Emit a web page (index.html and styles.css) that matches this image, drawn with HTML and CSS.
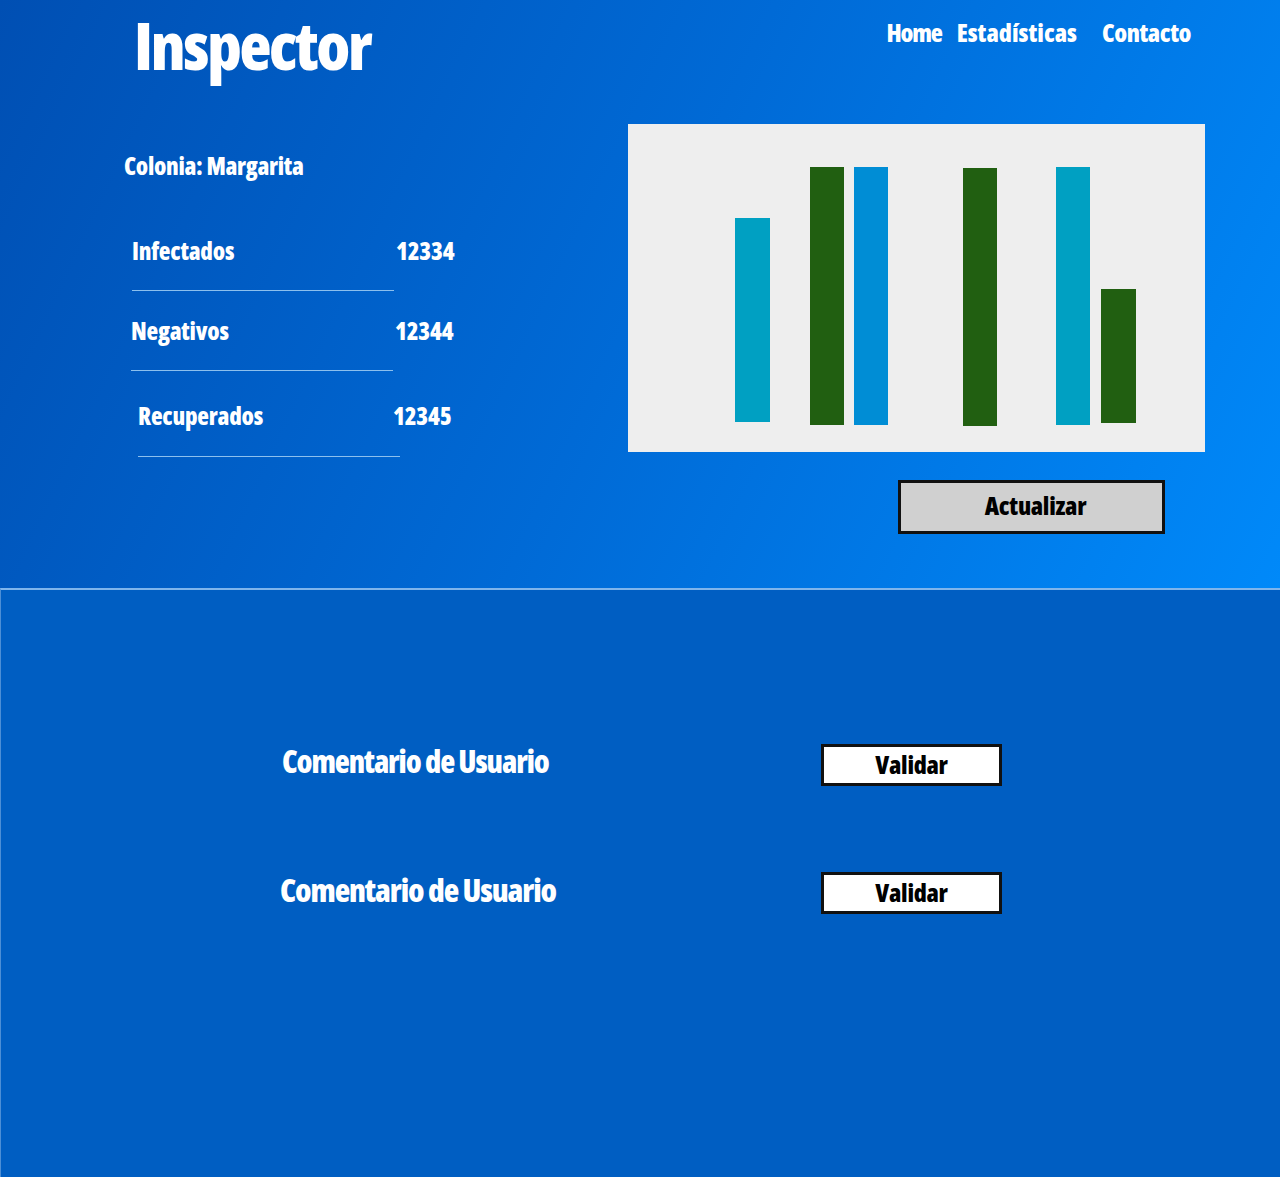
FILE: index.html
```html
<!DOCTYPE html>
<html lang="es">
<head>
<meta charset="utf-8">
<title>Inspector</title>
<link rel="stylesheet" href="styles.css">
</head>
<body>
<section class="top">
  <header class="header">
    <h1 class="logo">Inspector</h1>
    <nav class="nav">
      <a class="nav-link nav-home" href="#">Home</a>
      <a class="nav-link nav-stats" href="#">Estadísticas</a>
      <a class="nav-link nav-contact" href="#">Contacto</a>
    </nav>
  </header>
  <div class="main">
    <div class="stats">
      <h2 class="colonia">Colonia: Margarita</h2>
      <div class="row row-1">
        <span class="label">Infectados</span><span class="value">12334</span>
      </div>
      <div class="line line-1"></div>
      <div class="row row-2">
        <span class="label">Negativos</span><span class="value">12344</span>
      </div>
      <div class="line line-2"></div>
      <div class="row row-3">
        <span class="label">Recuperados</span><span class="value">12345</span>
      </div>
      <div class="line line-3"></div>
    </div>
    <div class="chart-col">
      <div class="chart">
        <div class="bar cyan b1"></div>
        <div class="bar green b2"></div>
        <div class="bar blue b3"></div>
        <div class="bar green b4"></div>
        <div class="bar cyan b5"></div>
        <div class="bar green b6"></div>
      </div>
      <button class="btn-update">Actualizar</button>
    </div>
  </div>
</section>
<section class="bottom">
  <div class="comment comment-1">
    <span class="comment-text">Comentario de Usuario</span>
    <button class="btn-validate">Validar</button>
  </div>
  <div class="comment comment-2">
    <span class="comment-text comment-text-2">Comentario de Usuario</span>
    <button class="btn-validate">Validar</button>
  </div>
</section>
</body>
</html>
```
FILE: styles.css
```css
* { box-sizing: border-box; }
html, body { margin: 0; padding: 0; }
body {
  width: 1280px;
  height: 1177px;
  overflow: hidden;
  font-family: "Open Sans", "DejaVu Sans Condensed", sans-serif;
  font-stretch: 75%;
  font-weight: 800;
  color: #fff;
  background: #005ec2;
}
.top {
  height: 588px;
  background: linear-gradient(115deg, #004fb3 0%, #006ad6 50%, #0089f9 100%);
}
.header {
  display: flex;
  justify-content: space-between;
  align-items: flex-start;
  padding: 0 89px 0 134px;
  height: 124px;
}
.logo {
  margin: 0;
  font-size: 66px;
  line-height: 88px;
  letter-spacing: -2.3px;
  font-weight: 800;
}
.nav {
  display: flex;
  margin-top: 17px;
}
.nav-link {
  color: #fff;
  text-decoration: none;
  font-size: 25px;
  line-height: 30px;
  margin-left: 15px;
  letter-spacing: -0.7px;
}
.nav-home { letter-spacing: -1.2px; }
.nav-stats { letter-spacing: 0; }
.nav-contact { letter-spacing: -0.45px; margin-left: 25px; }
.main {
  display: flex;
}
.stats {
  width: 628px;
  flex: none;
  padding-left: 124px;
}
.colonia {
  margin: 27px 0 0 0;
  font-size: 24px;
  line-height: 30px;
  font-weight: 800;
  letter-spacing: -0.3px;
}
.row {
  display: grid;
  grid-template-columns: 264px auto;
  font-size: 24px;
  line-height: 30px;
  letter-spacing: -0.2px;
}
.row-1 { margin: 55px 0 0 8px; }
.row-2 { margin: 25px 0 0 7px; }
.row-3 { margin: 30px 0 0 14px; grid-template-columns: 255px auto; }
.line {
  height: 1px;
  width: 262px;
  background: #8cc0ee;
}
.line-1 { margin: 24px 0 0 8px; }
.line-2 { margin: 24px 0 0 7px; }
.line-3 { margin: 25px 0 0 14px; }
.chart-col {
  display: flex;
  flex-direction: column;
  align-items: flex-start;
}
.chart {
  width: 577px;
  height: 328px;
  background: #eeeeee;
  display: flex;
  align-items: flex-start;
  padding: 43px 0 0 107px;
}
.bar { width: 35px; flex: none; }
.cyan { background: #00a0c2; }
.green { background: #215f11; }
.blue { background: #008dd5; }
.b1 { height: 204px; margin-top: 51px; }
.b2 { height: 258px; margin-left: 40px; width: 34px; }
.b3 { height: 258px; margin-left: 10px; width: 34px; }
.b4 { height: 258px; margin-left: 75px; margin-top: 1px; width: 34px; }
.b5 { height: 258px; margin-left: 59px; width: 34px; }
.b6 { height: 134px; margin-left: 11px; margin-top: 122px; }
.btn-update {
  margin: 28px 0 0 270px;
  width: 267px;
  height: 54px;
  background: #d0d0d0;
  border: 3px solid #111;
  font-family: inherit;
  font-stretch: 75%;
  font-weight: 800;
  font-size: 25px;
  color: #000;
  padding: 0 0 5px 8px;
  letter-spacing: -0.3px;
}
.bottom {
  height: 589px;
  border-top: 2px solid #7fb5ec;
  border-left: 1px solid #4d8fd6;
  padding-top: 153px;
}
.comment {
  display: flex;
  align-items: center;
}
.comment-text {
  width: 540px;
  flex: none;
  white-space: nowrap;
  padding-left: 281px;
  padding-bottom: 7px;
  font-size: 31px;
  line-height: 36px;
  letter-spacing: -1.1px;
}
.comment-text-2 { padding-left: 279px; font-size: 32px; padding-bottom: 6px; }
.btn-validate {
  margin-left: 280px;
  width: 181px;
  height: 42px;
  background: #fff;
  border: 3px solid #111;
  font-family: inherit;
  font-stretch: 75%;
  font-weight: 800;
  font-size: 25px;
  color: #000;
  padding: 0 0 3px 0;
  letter-spacing: -0.3px;
}
.comment-2 { margin-top: 86px; }
```
